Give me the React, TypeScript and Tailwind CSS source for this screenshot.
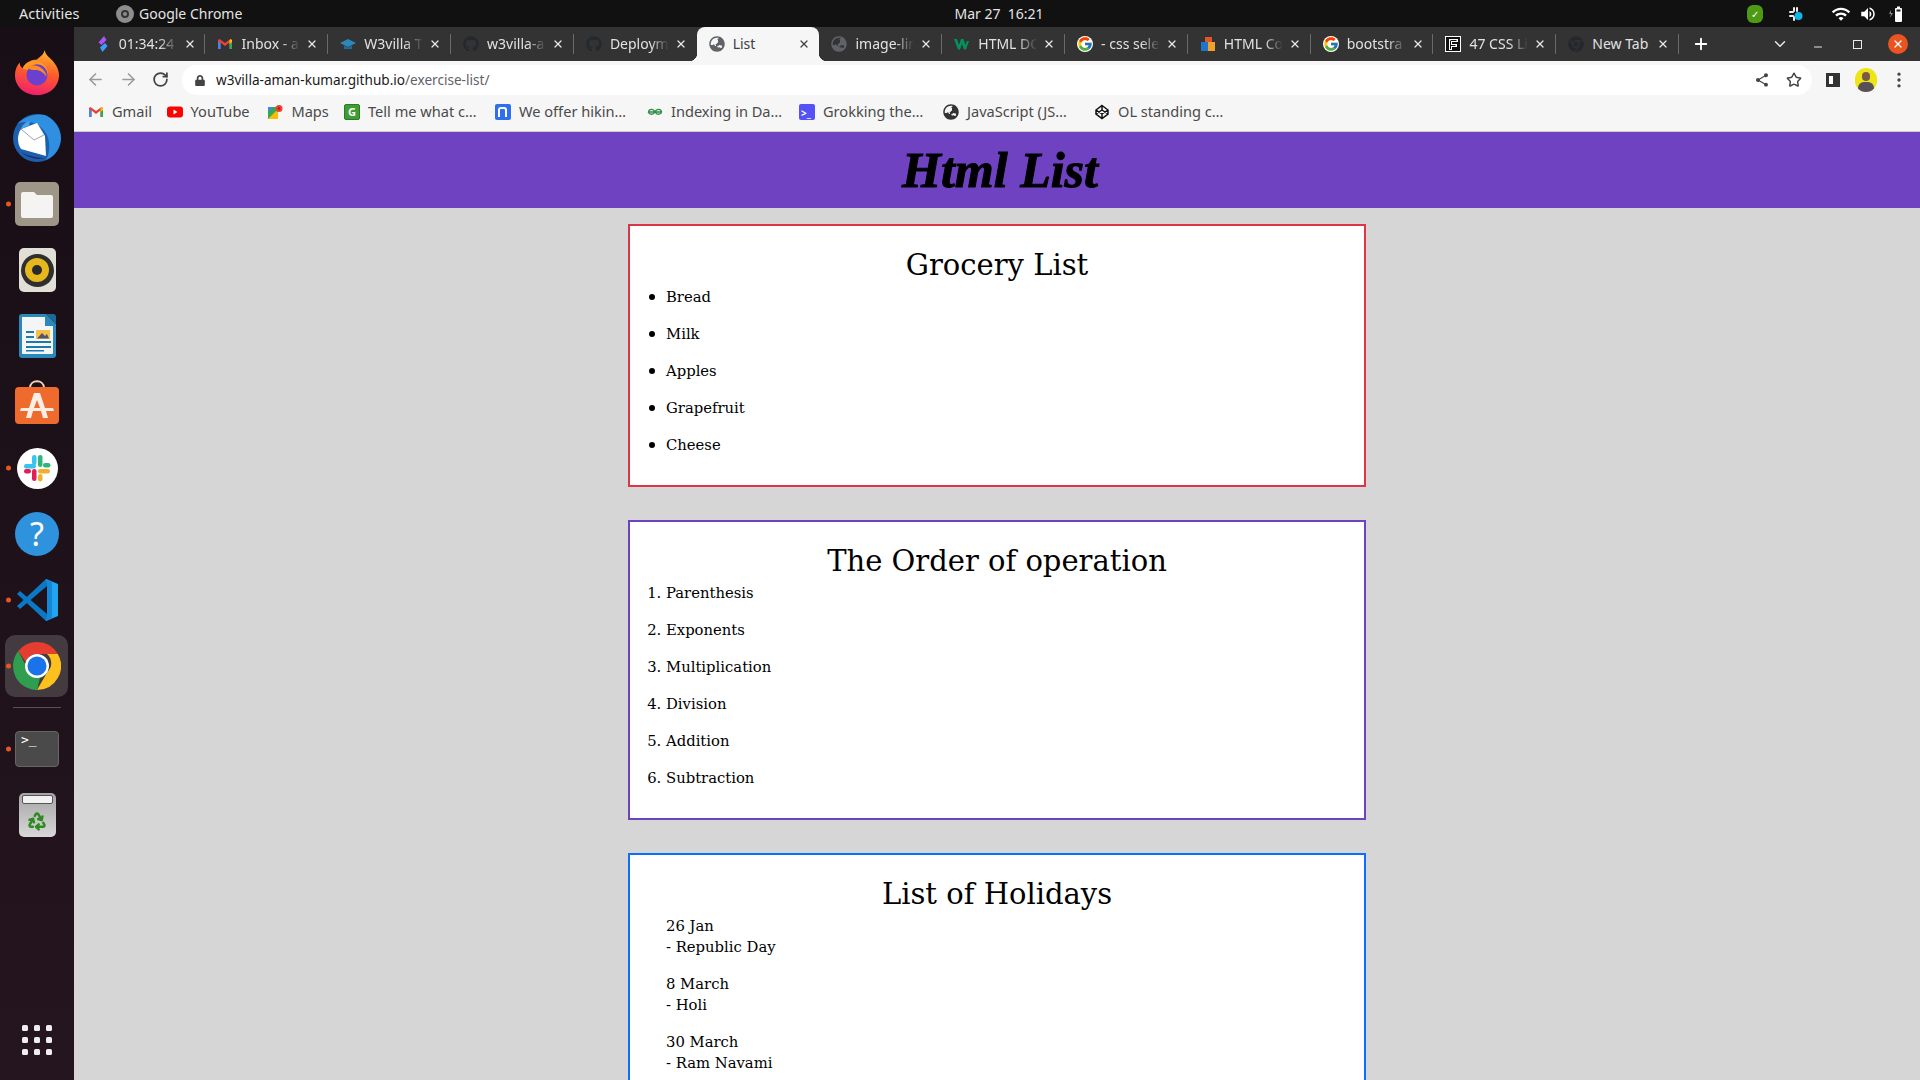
import { ArrowLeft, ArrowRight, ChevronDown, EllipsisVertical, Minus, Plus, Recycle, RotateCw, Star, X } from 'lucide-react';
import { FaChrome, FaGithub, FaGlobeAsia, FaLock } from 'react-icons/fa';
import { FcGoogle } from 'react-icons/fc';
import { MdShare, MdVolumeUp, MdWifi } from 'react-icons/md';
import type { ReactNode } from 'react';

const uiFont = "font-['Noto_Sans',sans-serif]";
const pageFont = "font-['DejaVu_Serif',serif]";

function GmailIcon() {
  return (
    <svg viewBox="0 0 16 16" className="w-4 h-4">
      <path d="M1 4v9h2.500V6.500L8 10l4.500-3.500V13H15V4l-1.500-1L8 7 2.500 3z" fill="#ea4335" />
      <path d="M1 5v8h2.500V7z" fill="#4285f4" />
      <path d="M15 5v8h-2.500V7z" fill="#34a853" />
      <path d="M12.500 4.500 13.500 3 15 4v2l-2.500 2z" fill="#fbbc04" />
    </svg>
  );
}

function ClockifyIcon() {
  return (
    <svg viewBox="0 0 16 16" className="w-4 h-4">
      <path d="M9 0 3.500 6.500 6.500 9 11.500 4z" fill="#a855f7" />
      <path d="M10 7 5 11.500 7.500 16l5-6z" fill="#3b9eff" />
    </svg>
  );
}

function W3villaIcon() {
  return (
    <svg viewBox="0 0 16 16" className="w-4 h-4">
      <path d="M0 7 8 3l8 4-8 4z" fill="#2f86b8" />
      <path d="M4 9.500V13h8V9.500L8 11.500z" fill="#1e6c99" />
    </svg>
  );
}

function W3Icon() {
  return (
    <svg viewBox="0 0 16 16" className="w-4 h-4">
      <path d="M0 3h3l2 6 2-6h2.500l2 6L13 5h2l-3 8.500H10L8 8l-2 5.500H4z" fill="#04915c" />
    </svg>
  );
}

function HtmlCssIcon() {
  return (
    <svg viewBox="0 0 16 16" className="w-4 h-4">
      <rect x="5" y="1" width="7" height="8" fill="#e2552a" />
      <rect x="1" y="6" width="7" height="9" fill="#1f75c9" />
      <rect x="8" y="6" width="7" height="9" fill="#efa22b" />
    </svg>
  );
}

function FIcon() {
  return (
    <svg viewBox="0 0 16 16" className="w-4 h-4">
      <rect width="16" height="16" fill="#fff" />
      <rect x="1" y="1" width="14" height="14" fill="#111" />
      <path d="M4 3h9v3H7v2h5v3H7v3H4z" fill="#fff" />
      <path d="M5.500 4.500h6M5.500 9.500h5M5.500 5v8" stroke="#111" strokeWidth="1" />
    </svg>
  );
}

function YouTubeIcon() {
  return (
    <svg viewBox="0 0 16 16" className="w-4 h-4">
      <rect y="2.500" width="16" height="11" rx="3" fill="#f00" />
      <path d="M6.500 5.500v5l4-2.500z" fill="#fff" />
    </svg>
  );
}

function MapsIcon() {
  return (
    <svg viewBox="0 0 16 16" className="w-4 h-4">
      <path d="M1 3h10v12H1z" fill="#34a853" />
      <path d="M1 15 11 5v10z" fill="#fbbc04" />
      <path d="M1 3h5L1 8z" fill="#4285f4" />
      <circle cx="12" cy="4.500" r="3.500" fill="#ea4335" />
      <circle cx="12" cy="4.500" r="1.200" fill="#a3261b" />
    </svg>
  );
}

function GreenGIcon() {
  return (
    <div className="w-4 h-4 rounded-[2px] bg-[#3f9d34] border border-[#2b7a24] flex items-center justify-center text-white text-[11px] leading-none font-bold">
      G
    </div>
  );
}

function NotionBlueIcon() {
  return (
    <div className="w-4 h-4 rounded-[2px] bg-[#2f6fed] flex items-center justify-center">
      <div className="w-[9px] h-[10px] border-2 border-b-0 border-white rounded-t-[3px]" />
    </div>
  );
}

function GeeksIcon() {
  return (
    <svg viewBox="0 0 16 16" className="w-4 h-4" fill="none" stroke="#2f8d46" strokeWidth="1.300">
      <path d="M8 8H1.500c.5-3.500 5-3.500 6.500 0 1.500 3 6 3 6.500 0H8M8 8c-1.500 3-6 3-6.500 0M8 8c1.500-3.500 6-3.500 6.500 0" />
    </svg>
  );
}

function GrokkingIcon() {
  return (
    <div className="w-4 h-4 rounded-[2px] bg-[#5452f6] flex items-end px-[2px] pb-[2px] text-white text-[10px] leading-none font-bold">
      &gt;_
    </div>
  );
}

function CodepenIcon() {
  return (
    <svg viewBox="0 0 16 16" className="w-4 h-4" fill="none" stroke="#111" strokeWidth="1.500">
      <path d="M8 1.500 14 6v4l-6 4.500L2 10V6zM8 6l-6 4M8 6l6 4M8 10 2 6M8 10l6-4M8 1.500V6M8 10v4.500" />
    </svg>
  );
}

const tabs: { title: string; icon: ReactNode; active?: boolean; fade?: boolean }[] = [
  { title: '01:34:24', icon: <ClockifyIcon />, fade: true },
  { title: 'Inbox - a', icon: <GmailIcon />, fade: true },
  { title: 'W3villa T', icon: <W3villaIcon />, fade: true },
  { title: 'w3villa-a', icon: <FaGithub className="w-4 h-4 text-[#24292f]" />, fade: true },
  { title: 'Deploym', icon: <FaGithub className="w-4 h-4 text-[#24292f]" />, fade: true },
  { title: 'List', icon: <FaGlobeAsia className="w-4 h-4 text-[#5f6368]" />, active: true },
  { title: 'image-lin', icon: <FaGlobeAsia className="w-4 h-4 text-[#5f6368]" />, fade: true },
  { title: 'HTML DO', icon: <W3Icon />, fade: true },
  { title: '- css sele', icon: <FcGoogle className="w-4 h-4 bg-white rounded-full" />, fade: true },
  { title: 'HTML Co', icon: <HtmlCssIcon />, fade: true },
  { title: 'bootstra', icon: <FcGoogle className="w-4 h-4 bg-white rounded-full" />, fade: true },
  { title: '47 CSS Li', icon: <FIcon />, fade: true },
  { title: 'New Tab', icon: <FaChrome className="w-4 h-4 text-[#24282c]" /> },
];

const bookmarks: { label: string; icon: ReactNode; width: string }[] = [
  { label: 'Gmail', icon: <GmailIcon />, width: 'w-[78.600px]' },
  { label: 'YouTube', icon: <YouTubeIcon />, width: 'w-[100.800px]' },
  { label: 'Maps', icon: <MapsIcon />, width: 'w-[76.600px]' },
  { label: 'Tell me what c…', icon: <GreenGIcon />, width: 'w-[151px]' },
  { label: 'We offer hikin…', icon: <NotionBlueIcon />, width: 'w-[152px]' },
  { label: 'Indexing in Da…', icon: <GeeksIcon />, width: 'w-[152px]' },
  { label: 'Grokking the…', icon: <GrokkingIcon />, width: 'w-[144px]' },
  { label: 'JavaScript (JS…', icon: <FaGlobeAsia className="w-4 h-4 text-[#333]" />, width: 'w-[151px]' },
  { label: 'OL standing c…', icon: <CodepenIcon />, width: 'w-[140px]' },
];

function TopBar() {
  return (
    <div className={`h-[27px] shrink-0 bg-[#111111] flex items-center text-[#e4e4e4] text-[14px] ${uiFont}`}>
      <span className="ml-[19px] w-[97px] whitespace-nowrap text-[14.500px]">Activities</span>
      <div className="w-[18px] h-[18px] rounded-full bg-[#8d8d8d] flex items-center justify-center mr-[5px]">
        <div className="w-2 h-2 rounded-full border-2 border-[#333]" />
      </div>
      <span className="w-[815.500px] whitespace-nowrap">Google Chrome</span>
      <span className="whitespace-pre">Mar 27  16:21</span>
      <div className="ml-auto flex items-center mr-[16px]">
        <div className="w-4 h-[18px] rounded-[6px] bg-[#4f9a15] flex items-center justify-center text-white text-[10px] leading-none mr-[24px]">
          ✓
        </div>
        <svg viewBox="0 0 16 16" className="w-4 h-4 mr-[28px]">
          <rect x="2" y="5" width="5" height="2" rx="1" fill="#eee" />
          <rect x="6" y="1" width="2" height="5" rx="1" fill="#eee" />
          <rect x="2" y="9" width="5" height="2" rx="1" fill="#eee" />
          <rect x="6" y="10" width="2" height="5" rx="1" fill="#eee" />
          <rect x="9" y="1" width="2" height="5" rx="1" fill="#eee" />
          <circle cx="11.500" cy="10" r="4" fill="#12b5e5" />
        </svg>
        <MdWifi className="w-5 h-5 text-white mr-[8px]" />
        <MdVolumeUp className="w-[18px] h-[18px] text-white mr-[11px]" />
        <svg viewBox="0 0 16 18" className="w-4 h-[18px]">
          <path d="M3 5 1 9h2l-1 4 3-5H3z" fill="#888" />
          <path d="M8 3h1V1.500h3V3h1a1 1 0 0 1 1 1v12a1 1 0 0 1-1 1H8a1 1 0 0 1-1-1V4a1 1 0 0 1 1-1z" fill="#fff" />
          <rect x="8.500" y="4.500" width="4" height="2" fill="#222" />
        </svg>
      </div>
    </div>
  );
}

function DockDot() {
  return <span className="absolute left-[5.500px] top-1/2 -translate-y-1/2 w-[5px] h-[5px] rounded-full bg-[#e95420]" />;
}

function DockItem({ children, dot, active }: { children: ReactNode; dot?: boolean; active?: boolean }) {
  return (
    <div className="relative h-[66px] flex items-center justify-center">
      {active && <div className="absolute left-[5px] right-[6px] top-[2px] bottom-[2px] rounded-[10px] bg-[#443b40]" />}
      {dot && <DockDot />}
      <div className="relative w-[48px] h-[48px] flex items-center justify-center">{children}</div>
    </div>
  );
}

function Firefox() {
  return (
    <svg viewBox="0 0 48 48" className="w-[46px] h-[46px]">
      <defs>
        <linearGradient id="ff" x1="0.600" y1="0" x2="0.400" y2="1">
          <stop offset="0" stopColor="#ffb52e" />
          <stop offset="0.500" stopColor="#ff5a2b" />
          <stop offset="1" stopColor="#f01f6e" />
        </linearGradient>
      </defs>
      <path d="M32 1c1 6 6 8 9 12 4 5 6 10 6 14 0 12-10 21-23 21S1 39 1 27c0-5 2-10 5-13 0 3 1 5 3 6 3-6 9-9 15-9 3-3 7-5 8-10z" fill="url(#ff)" />
      <path d="M9 20c4-7 12-9 19-6 6 3 8 9 7 13-3-4-8-6-12-5-5 0-8 1-14-2z" fill="#ff9a1f" />
      <circle cx="24" cy="27" r="11" fill="#6b3fcf" />
      <path d="M13 18c6-2 13-1 17 3 2 2 4 5 4 8-3-5-8-8-14-7-3 0-5-2-7-4z" fill="#ff8a1f" />
    </svg>
  );
}

function Thunderbird() {
  return (
    <svg viewBox="0 0 48 48" className="w-[48px] h-[48px]">
      <circle cx="24" cy="24" r="24" fill="#1c5fae" />
      <path d="M4 10C12 2 24-1 32 1c9 4 15 12 16 23-1 11-6 18-15 22 5-9 4-22-1-28C25 8 13 6 4 10z" fill="#2f8fe0" />
      <path d="M8 15 24 9l8 13 1 20-25-7c-4-6-4-14 0-20z" fill="#fff" />
      <path d="M8 15 21 26l10-5" fill="none" stroke="#9aa4ad" strokeWidth="1" />
      <path d="M8 38c5 4 10 6 17 7l8-1c-10 0-18-2-25-6z" fill="#27225f" />
      <path d="M8 15c1-4 4-7 9-8l-1 5z" fill="#4aa3e8" />
    </svg>
  );
}

function Files() {
  return (
    <div className="w-[44px] h-[44px] rounded-[5px] bg-[#9e9787] flex items-center justify-center">
      <svg viewBox="0 0 32 28" className="w-8 h-7">
        <path d="M2 2h11l3 3h14a2 2 0 0 1 2 2v19a2 2 0 0 1-2 2H2a2 2 0 0 1-2-2V4a2 2 0 0 1 2-2z" fill="#f5f4f2" />
      </svg>
    </div>
  );
}

function Rhythmbox() {
  return (
    <div className="w-[37px] h-[44px] rounded-[5px] bg-[#e2dfd7] flex items-center justify-center">
      <div className="w-[33px] h-[33px] rounded-full bg-[#2f2f2f] flex items-center justify-center">
        <div className="w-[24px] h-[24px] rounded-full bg-[#e6b81e] flex items-center justify-center">
          <div className="w-[10px] h-[10px] rounded-full bg-[#2a2a2a]" />
        </div>
      </div>
    </div>
  );
}

function Writer() {
  return (
    <svg viewBox="0 0 37 44" className="w-[37px] h-[44px]">
      <path d="M3 0h24l10 10v31a3 3 0 0 1-3 3H3a3 3 0 0 1-3-3V3a3 3 0 0 1 3-3z" fill="#2b88ba" />
      <path d="M3 3h23v9h8v27a1 1 0 0 1-1 1H3z" fill="#f3f5f6" />
      <path d="M27 0h7a3 3 0 0 1 3 3v7z" fill="#1c6a97" />
      <path d="M7 17h8v2H7zM7 22h8v2H7zM7 27h25v2H7zM7 32h25v2H7zM7 36h18v1.500H7z" fill="#1f78ad" />
      <rect x="17" y="16" width="14" height="9" fill="#f5c04a" />
      <path d="M18 24.500 23 19l3 3 2-2 2 4.500z" fill="#556" />
    </svg>
  );
}

function AppStore() {
  return (
    <svg viewBox="0 0 44 44" className="w-[44px] h-[44px]">
      <path d="M15 8c0-9 14-9 14 0" fill="none" stroke="#f1d4b8" strokeWidth="2" />
      <rect y="7" width="44" height="37" rx="4" fill="#ef6a2d" />
      <path d="M19 13h6l5 15h8l1 3h-8l2 7h-5l-2-7H18l-2 7h-5l2-7H5l1-3h8zM22 20l-3 8h6z" fill="#fbeee4" />
    </svg>
  );
}

function Slack() {
  return (
    <div className="w-[41px] h-[41px] rounded-full bg-white flex items-center justify-center">
      <svg viewBox="0 0 28 28" className="w-7 h-7">
        <rect x="1" y="10" width="12" height="4.500" rx="2.200" fill="#36c5f0" />
        <rect x="9" y="1" width="4.500" height="10" rx="2.200" fill="#36c5f0" />
        <rect x="15" y="1" width="4.500" height="12" rx="2.200" fill="#2eb67d" />
        <rect x="20" y="9" width="7.500" height="4.500" rx="2.200" fill="#2eb67d" />
        <rect x="15" y="15" width="12" height="4.500" rx="2.200" fill="#ecb22e" />
        <rect x="15" y="20" width="4.500" height="7.500" rx="2.200" fill="#ecb22e" />
        <rect x="9" y="15" width="4.500" height="12" rx="2.200" fill="#e01e5a" />
        <rect x="1" y="15" width="7" height="4.500" rx="2.200" fill="#e01e5a" />
      </svg>
    </div>
  );
}

function Help() {
  return (
    <div className={`w-[44px] h-[44px] rounded-full bg-[#2f92dc] flex items-center justify-center text-white text-[32px] leading-none ${uiFont}`}>
      ?
    </div>
  );
}

function VSCode() {
  return (
    <svg viewBox="0 0 44 44" className="w-[44px] h-[44px]">
      <path d="M2 16 5 13l27 23-1 7z" fill="#0a78c4" />
      <path d="M2 28l3 3L32 8 31 1z" fill="#0a78c4" />
      <path d="M31 1l12 5v32l-12 5 1-7V8z" fill="#22a5f1" />
      <path d="M31 1l1 7v28l-1 7 6-2.500V3.500z" fill="#1488d8" />
    </svg>
  );
}

function ChromeLogo() {
  return (
    <svg viewBox="0 0 48 48" className="w-[48px] h-[48px]">
      <path d="M24 0a24 24 0 0 1 20.800 12H24a12 12 0 0 0-11.300 8L5.300 9A24 24 0 0 1 24 0z" fill="#e53d30" />
      <path d="M44.800 12A24 24 0 0 1 24 48l10.400-18a12 12 0 0 0-.4-18z" fill="#fcc11c" />
      <path d="M24 48A24 24 0 0 1 5.300 9l8.800 17a12 12 0 0 0 13 9.500z" fill="#2f9e4f" />
      <circle cx="24" cy="24" r="12" fill="#fff" />
      <circle cx="24" cy="24" r="9.500" fill="#1a73e8" />
    </svg>
  );
}

function Terminal() {
  return (
    <div className="w-[44px] h-[36px] rounded-[4px] bg-[#4a4a4a] border border-[#666] px-[5px] text-white text-[13px] leading-[16px] font-['DejaVu_Sans_Mono',monospace]">
      &gt;_
    </div>
  );
}

function Trash() {
  return (
    <div className="relative w-[37px] h-[44px] rounded-[5px] bg-gradient-to-b from-[#a5a5a5] to-[#d8d8d8] flex items-end justify-center pb-[6px]">
      <div className="absolute top-[2px] left-[3px] right-[3px] h-[9px] rounded-[2px] bg-[#f2f2f2] border border-[#555]" />
      <Recycle className="w-5 h-5 text-[#2f8a21]" strokeWidth={3} />
    </div>
  );
}

function Dock() {
  return (
    <div className="w-[74px] shrink-0 pt-[12px] flex flex-col bg-gradient-to-b from-[#180e16] to-[#25151e] z-10">
      <DockItem><Firefox /></DockItem>
      <DockItem><Thunderbird /></DockItem>
      <DockItem dot><Files /></DockItem>
      <DockItem><Rhythmbox /></DockItem>
      <DockItem><Writer /></DockItem>
      <DockItem><AppStore /></DockItem>
      <DockItem dot><Slack /></DockItem>
      <DockItem><Help /></DockItem>
      <DockItem dot><VSCode /></DockItem>
      <DockItem dot active><ChromeLogo /></DockItem>
      <div className="h-px mx-[13px] my-[8px] bg-[#5a5055]" />
      <DockItem dot><Terminal /></DockItem>
      <DockItem><Trash /></DockItem>
      <div className="mt-auto h-[55px] flex justify-center">
        <div className="grid grid-cols-3 gap-[6px] h-fit">
          {Array.from({ length: 9 }).map((_, i) => (
            <div key={i} className="w-[6px] h-[6px] rounded-[1.500px] bg-[#eeeeee]" />
          ))}
        </div>
      </div>
    </div>
  );
}

function Tab({ title, icon, active, fade, hideSep }: { title: string; icon: ReactNode; active?: boolean; fade?: boolean; hideSep?: boolean }) {
  return (
    <div className={`relative w-[122.800px] h-full shrink-0 flex items-center pl-[12px] ${active ? 'bg-[#f6f6f6] rounded-t-[8px] text-[#3c4043]' : 'text-[#e2e2e2]'}`}>
      {active && (
        <>
          <span className="absolute -left-2 bottom-0 w-2 h-2 bg-[radial-gradient(circle_at_0_0,transparent_8px,#f6f6f6_8.500px)]" />
          <span className="absolute -right-2 bottom-0 w-2 h-2 bg-[radial-gradient(circle_at_100%_0,transparent_8px,#f6f6f6_8.500px)]" />
        </>
      )}
      <div className="w-4 h-4 shrink-0 flex items-center justify-center">{icon}</div>
      <div className={`ml-[8px] w-[62px] pb-[2px] whitespace-nowrap overflow-hidden ${fade ? '[mask-image:linear-gradient(to_right,black_65%,transparent_95%)]' : ''}`}>
        {title}
      </div>
      <X className={`ml-[3px] w-3 h-3 shrink-0 ${active ? 'text-[#3c4043]' : 'text-[#e8e8e8]'}`} strokeWidth={2.500} />
      {!active && !hideSep && <span className="absolute right-0 top-[7px] bottom-[7px] w-px bg-[#6a6a6a]" />}
    </div>
  );
}

function Browser() {
  return (
    <div className={`shrink-0 text-[14px] ${uiFont}`}>
      <div className="h-[34px] bg-[#333333] flex items-center pl-[8.700px]">
        {tabs.map((t, i) => (
          <Tab key={i} title={t.title} icon={t.icon} active={t.active} fade={t.fade} hideSep={tabs[i + 1]?.active} />
        ))}
        <Plus className="ml-[13px] w-[18px] h-[18px] text-white" strokeWidth={2.500} />
        <ChevronDown className="ml-[61px] w-[18px] h-[18px] text-[#e8e8e8]" />
        <Minus className="ml-[23px] w-3 h-3 mt-[6px] text-[#e8e8e8]" />
        <div className="ml-[29px] w-[9px] h-[9px] border border-[#e8e8e8]" />
        <div className="ml-[26px] w-5 h-5 rounded-full bg-[#e95420] flex items-center justify-center">
          <X className="w-3 h-3 text-white" strokeWidth={2.500} />
        </div>
      </div>
      <div className="h-[37px] bg-[#f6f6f6] flex items-center">
        <ArrowLeft className="ml-[12px] w-[19px] h-[19px] text-[#9a9a9a]" />
        <ArrowRight className="ml-[14px] w-[19px] h-[19px] text-[#9a9a9a]" />
        <RotateCw className="ml-[14px] w-[17px] h-[17px] text-[#444]" strokeWidth={2.500} />
        <div className="ml-[13px] w-[1629.500px] h-[30px] mb-[-1px] rounded-full bg-white flex items-center">
          <FaLock className="ml-[13px] w-[10px] h-[11px] text-[#444]" />
          <span className="ml-[11px] text-[13.600px] text-[#1a1a1a] whitespace-nowrap">
            w3villa-aman-kumar.github.io<span className="text-[#5f6368]">/exercise-list/</span>
          </span>
          <MdShare className="ml-auto w-4 h-4 text-[#444]" />
          <Star className="ml-[16px] mr-[10px] w-4 h-4 text-[#444]" strokeWidth={2.200} />
        </div>
        <div className="ml-[14px] w-[14px] h-[14px] border-[3px] border-r-[7px] border-[#333] bg-white" />
        <div className="relative ml-[15px] w-[22px] h-[24px] rounded-full bg-[#efe414] overflow-hidden">
          <div className="absolute left-[7px] top-[4px] w-[8px] h-[9px] rounded-full bg-[#7a5a48]" />
          <div className="absolute left-[3px] top-[14px] w-[16px] h-[12px] rounded-t-[6px] bg-[#55505a]" />
        </div>
        <EllipsisVertical className="ml-[12px] w-5 h-5 text-[#444]" />
      </div>
      <div className="h-[34px] pb-[5px] bg-[#f6f6f6] border-b border-[#cdcdcd] flex items-center pl-[14px] text-[#4a4a4a] text-[14.600px]">
        {bookmarks.map((b) => (
          <div key={b.label} className={`flex items-center gap-2 shrink-0 whitespace-nowrap ${b.width}`}>
            {b.icon}
            <span>{b.label}</span>
          </div>
        ))}
      </div>
    </div>
  );
}

function Card({ title, border, children }: { title: string; border: string; children: ReactNode }) {
  return (
    <section className={`w-[738px] shrink-0 bg-white border-2 px-4 pt-[17.500px] pb-[14.500px] text-black ${border}`}>
      <h2 className="text-center text-[29px] leading-[42px]">{title}</h2>
      {children}
    </section>
  );
}

const grocery = ['Bread', 'Milk', 'Apples', 'Grapefruit', 'Cheese'];
const operations = ['Parenthesis', 'Exponents', 'Multiplication', 'Division', 'Addition', 'Subtraction'];
const holidays = [
  ['26 Jan', '- Republic Day'],
  ['8 March', '- Holi'],
  ['30 March', '- Ram Navami'],
];

function Page() {
  return (
    <div className={`flex-1 min-h-0 overflow-hidden bg-[#d6d6d6] ${pageFont}`}>
      <header className="h-[76px] bg-[#6f42c1] flex items-center justify-center pl-[6px]">
        <h1 className="font-['Liberation_Serif',serif] italic font-bold text-[50px] leading-none text-black [-webkit-text-stroke:1px_black]">
          Html List
        </h1>
      </header>
      <main className="pt-4 flex flex-col items-center gap-[33px] text-[14.800px] leading-[21px]">
        <Card title="Grocery List" border="border-[#dc3545]">
          <ul className="pl-5">
            {grocery.map((g) => (
              <li key={g} className="relative mb-4 before:absolute before:-left-[17px] before:top-[8px] before:w-[6px] before:h-[6px] before:rounded-full before:bg-black before:content-['']">
                {g}
              </li>
            ))}
          </ul>
        </Card>
        <Card title="The Order of operation" border="border-[#6f42c1]">
          <ol className="list-decimal pl-5">
            {operations.map((o) => (
              <li key={o} className="mb-4">{o}</li>
            ))}
          </ol>
        </Card>
        <Card title="List of Holidays" border="border-[#0d6efd]">
          <dl className="pl-5">
            {holidays.map(([date, name]) => (
              <div key={date} className="mb-4">
                <dt>{date}</dt>
                <dd>{name}</dd>
              </div>
            ))}
          </dl>
        </Card>
      </main>
    </div>
  );
}

export default function App() {
  return (
    <div className="h-screen w-screen overflow-hidden flex flex-col">
      <TopBar />
      <div className="flex-1 min-h-0 flex">
        <Dock />
        <div className="flex-1 min-w-0 flex flex-col">
          <Browser />
          <Page />
        </div>
      </div>
    </div>
  );
}
